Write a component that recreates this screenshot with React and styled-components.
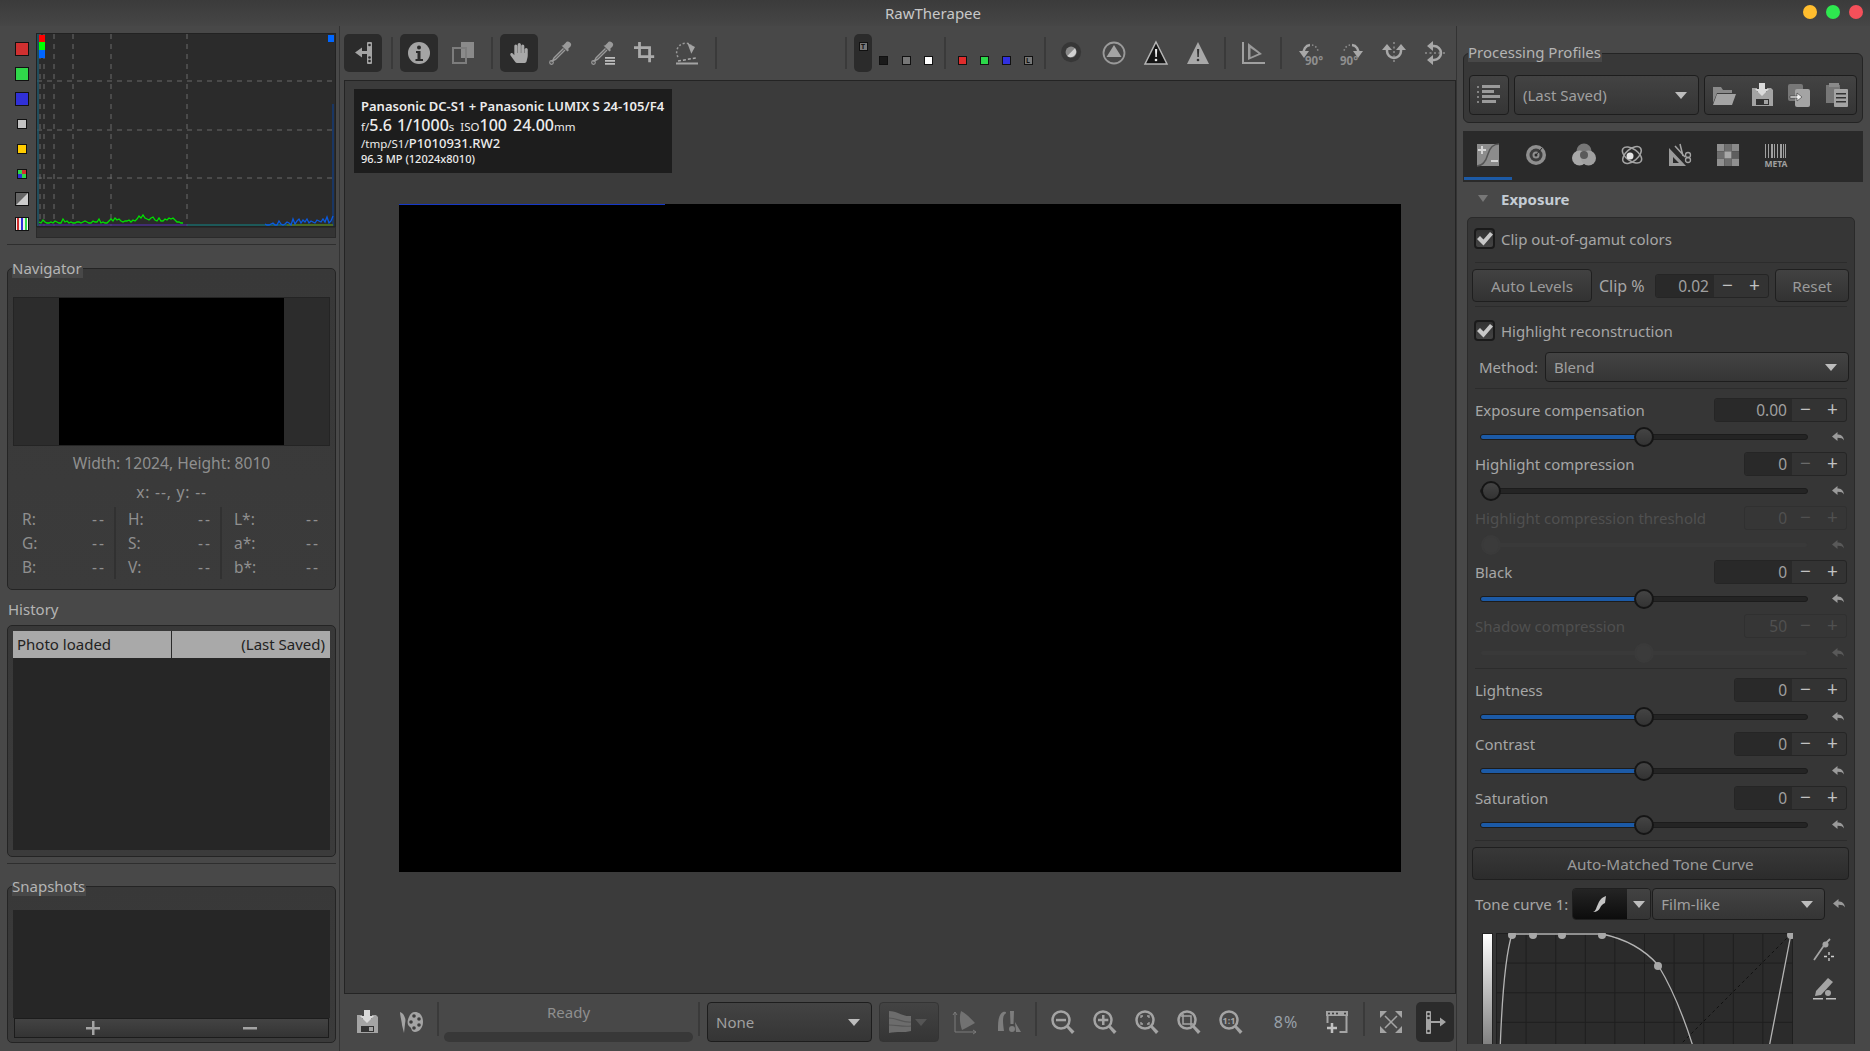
import React from 'react';
import styled, { createGlobalStyle } from 'styled-components';
import { FaHandPaper } from 'react-icons/fa';

const GlobalStyle = createGlobalStyle`
  html, body {
    margin: 0;
    padding: 0;
    background: #484848;
  }
  * {
    box-sizing: border-box;
  }
  body {
    font-family: 'Noto Sans', 'Open Sans', sans-serif;
    font-size: 15px;
    color: #a6a6a6;
  }
`;

const GREEN = [2,1,4,2,1,1,2,1,3,2,1,1,5,2,3,1,2,1,1,2,2,1,2,3,2,1,1,3,2,2,5,1,2,1,1,3,5,3,6,4,5,3,2,3,3,4,2,4,3,5,8,6,9,6,5,4,6,7,4,3,6,3,3,5,4,6,5,6,4,2,2,1,1];
const BLUE = [1,0,0,1,2,0,0,4,1,0,1,3,2,0,6,1,4,6,2,5,3,6,2,4,3,2,5,4,3,6,3,8,2,4,9];

const Win = styled.div`
  width: 1870px;
  height: 1051px;
  display: flex;
  flex-direction: column;
  overflow: hidden;
  background: #484848;
`;

const TitleBar = styled.div`
  height: 26px;
  flex: none;
  display: flex;
  align-items: center;
  justify-content: center;
  position: relative;
  padding-right: 4px;
  background: linear-gradient(#3b3b3b, #464646);
  color: #c8c8c8;
  font-size: 15px;
`;

const Dots = styled.div`
  position: absolute;
  right: 7px;
  top: 5px;
  display: flex;
  gap: 9px;
`;

const Dot = styled.span`
  width: 14px;
  height: 14px;
  border-radius: 50%;
  background: ${(p) => p.$c};
`;

const Body = styled.div`
  flex: 1;
  min-height: 0;
  display: flex;
`;

const LeftCol = styled.div`
  width: 340px;
  flex: none;
  padding: 7px 3px 0 7px;
  border-right: 1px solid #333;
`;

const HistRow = styled.div`
  display: flex;
`;

const HistButtons = styled.div`
  width: 30px;
  padding-top: 3px;
  display: flex;
  flex-direction: column;
`;

const HistSlot = styled.div`
  height: 25px;
  display: flex;
  align-items: center;
  justify-content: center;
`;

const HistBox = styled.span`
  display: block;
  width: ${(p) => p.$s}px;
  height: ${(p) => p.$s}px;
  border: 1px solid #111;
  background: ${(p) => p.$c};
`;

const HistColumn = styled.div`
  width: 300px;
`;

const HistPlot = styled.svg`
  display: block;
  width: 300px;
  height: 194px;
  background: #2b2b2b;
  border: 1px solid #222;
`;

const HistBar = styled.div`
  height: 11px;
  background: #343434;
  border: 1px solid #2a2a2a;
`;

const PaneSep = styled.div`
  height: 1px;
  margin-top: ${(p) => p.$mt}px;
  background: #2e2e2e;
`;

const Frame = styled.div`
  position: relative;
  border: 1px solid #242424;
  border-radius: 5px;
  background: linear-gradient(#383838, #3b3b3b);
  margin-top: ${(p) => p.$mt || 0}px;
  height: ${(p) => p.$h}px;
  padding: ${(p) => p.$pt}px 5px 0 5px;
`;

const Legend = styled.span`
  position: absolute;
  left: 4px;
  top: ${(p) => p.$top ?? -11}px;
  padding-right: 1px;
  background: #484848;
  line-height: 20px;
  height: 20px;
  color: #b4b4b4;
`;

const NavPreview = styled.div`
  height: 149px;
  background: #2c2c2c;
  border: 1px solid #242424;
  display: flex;
  justify-content: center;
`;

const NavImage = styled.div`
  width: 225px;
  background: #000;
`;

const NavLine = styled.div`
  margin-top: ${(p) => p.$mt}px;
  line-height: 20px;
  text-align: center;
  font-size: 15.6px;
  letter-spacing: ${(p) => p.$ls || 0}px;
  color: #8f8f8f;
`;

const ValueGrid = styled.div`
  display: flex;
  margin: 5px 0 0 9px;
  height: 72px;
`;

const ValueCol = styled.div`
  width: 94px;
  flex: none;
  padding-right: 10px;
  margin-right: 12px;
  border-right: ${(p) => (p.$last ? 'none' : '2px solid #313131')};
`;

const ValueRow = styled.div`
  height: 24px;
  display: flex;
  justify-content: space-between;
  align-items: center;
  color: #8f8f8f;
  font-size: 15.5px;
`;

const Dash = styled.span`
  letter-spacing: 2px;
  margin-right: -2px;
`;

const PlainLabel = styled.div`
  margin: 9px 0 0 1px;
  line-height: 20px;
  color: #b4b4b4;
`;

const HistoryList = styled.div`
  height: 219px;
  background: #262626;
`;

const HistoryRow = styled.div`
  height: 27px;
  display: grid;
  grid-template-columns: 159px 1fr;
  background: #a9a9a9;
  color: #222;
  line-height: 27px;
`;

const HistoryCell = styled.div`
  padding: 0 5px 0 4px;
  text-align: ${(p) => p.$align || 'left'};
  border-right: ${(p) => (p.$line ? '1px solid #2a2a2a' : 'none')};
`;

const SnapList = styled.div`
  height: 108px;
  background: #262626;
`;

const SnapButtons = styled.div`
  height: 20px;
  margin: 0 1px;
  display: grid;
  grid-template-columns: 1fr 1fr;
  border: 1px solid #1c1c1c;
  background: linear-gradient(#434343, #343434);
`;

const SnapButton = styled.div`
  display: flex;
  align-items: center;
  justify-content: center;
`;

const CenterCol = styled.div`
  width: 1112px;
  margin-left: 4px;
  flex: none;
  display: flex;
  flex-direction: column;
`;

const Toolbar = styled.div`
  height: ${(p) => p.$h}px;
  flex: none;
  display: flex;
  align-items: ${(p) => p.$align || 'center'};
  padding-top: ${(p) => p.$pt || 0}px;
`;

const Tool = styled.div`
  width: ${(p) => p.$w || 38}px;
  height: ${(p) => p.$hh || 38}px;
  margin-left: ${(p) => p.$ml || 0}px;
  flex: none;
  display: flex;
  align-items: center;
  justify-content: center;
  border-radius: 5px;
  background: ${(p) => (p.$active ? '#2b2b2b' : 'transparent')};
`;

const Sep = styled.span`
  width: 2px;
  height: ${(p) => p.$h || 32}px;
  flex: none;
  margin: 0 ${(p) => p.$r ?? 7}px 0 ${(p) => p.$l ?? 9}px;
  background: #3a3a3a;
`;

const Push = styled.div`
  margin-left: auto;
`;

const TinyBox = styled.span`
  width: 9px;
  height: 9px;
  margin-top: ${(p) => p.$mt ?? 14}px;
  display: block;
  border: 1px solid #111;
  background: ${(p) => p.$c};
  color: #111;
  font-size: 7px;
  font-weight: 700;
  line-height: 7px;
  text-align: center;
`;

const ToolStrip = styled(Tool)`
  background: #2b2b2b;
  align-items: flex-start;
  padding-top: 8px;
`;

const Preview = styled.div`
  flex: 1;
  min-height: 0;
  position: relative;
  display: flex;
  align-items: center;
  justify-content: center;
  padding-top: 2px;
  border: 1px solid #242424;
  background: #3b3b3b;
`;

const MetaBox = styled.div`
  position: absolute;
  left: 9px;
  top: 8px;
  width: 318px;
  height: 84px;
  padding: 7px 7px;
  background: #1d1d1d;
  color: #ececec;
`;

const MetaLine = styled.div`
  height: ${(p) => p.$lh}px;
  font-size: ${(p) => p.$fs}px;
  font-weight: ${(p) => p.$fw || 400};
  line-height: ${(p) => p.$lh}px;
  white-space: nowrap;
`;

const MetaBig = styled.span`
  font-size: ${(p) => p.$fs || 16}px;
  font-weight: 500;
  margin-right: ${(p) => p.$mr || 0}px;
`;

const PhotoArea = styled.div`
  position: relative;
  width: 1002px;
  height: 668px;
  background: #000;
`;

const BlueEdge = styled.div`
  position: absolute;
  left: 0;
  top: 0;
  width: 266px;
  height: 1px;
  background: #1638c8;
`;

const ReadyBlock = styled.div`
  width: 249px;
  height: 40px;
  flex: none;
  display: flex;
  flex-direction: column;
  justify-content: space-between;
`;

const ReadyText = styled.div`
  line-height: 20px;
  font-size: 15px;
  text-align: center;
  color: #8f8f8f;
`;

const ProgressTrack = styled.div`
  height: 10px;
  border-radius: 5px;
  background: #383838;
`;

const Combo = styled.div`
  width: ${(p) => p.$w}px;
  height: ${(p) => p.$h}px;
  margin-left: ${(p) => p.$ml || 0}px;
  flex: none;
  display: flex;
  align-items: center;
  justify-content: space-between;
  padding: 0 11px 0 8px;
  border: 1px solid ${(p) => (p.$off ? '#343434' : '#1d1d1d')};
  border-radius: 4px;
  background: linear-gradient(#434343, #353535);
  color: ${(p) => (p.$off ? '#666' : '#a0a0a0')};
`;

const Caret = styled.span`
  width: 0;
  height: 0;
  flex: none;
  border-left: 6px solid transparent;
  border-right: 6px solid transparent;
  border-top: 7px solid ${(p) => p.$c || '#bdbdbd'};
`;

const Zoom = styled.div`
  width: 68px;
  height: 40px;
  flex: none;
  display: flex;
  align-items: center;
  justify-content: center;
  font-size: 16px;
  letter-spacing: 1px;
  color: #98a0a8;
`;

const RightCol = styled.div`
  width: 414px;
  flex: none;
  padding: 27px 0 7px 6px;
  border-left: 1px solid #333;
  display: flex;
  flex-direction: column;
`;

const ProfileFrame = styled.div`
  position: relative;
  width: 400px;
  height: 70px;
  flex: none;
  padding: 21px 5px 0 5px;
  display: flex;
  border: 1px solid #242424;
  border-radius: 6px;
  background: #383838;
`;

const ProfileButton = styled.div`
  width: 40px;
  height: 40px;
  flex: none;
  display: flex;
  align-items: center;
  justify-content: center;
  border: 1px solid #1d1d1d;
  border-radius: 4px;
  background: linear-gradient(#434343, #353535);
`;

const ProfileGroup = styled(ProfileButton)`
  width: 153px;
  margin-left: 5px;
  justify-content: space-between;
  padding: 0 7px 0 7px;
`;

const TabBar = styled.div`
  width: 400px;
  height: 51px;
  flex: none;
  margin-top: 8px;
  padding-left: 1px;
  display: flex;
  background: #2a2a2a;
`;

const Tab = styled.div`
  width: 48px;
  height: 49px;
  padding-top: 2px;
  display: flex;
  align-items: center;
  justify-content: center;
  border-bottom: 3px solid ${(p) => (p.$active ? '#1c5aa6' : 'transparent')};
`;

const SectionHead = styled.div`
  height: 35px;
  flex: none;
  display: flex;
  align-items: center;
  gap: 13px;
  padding: 0 0 2px 15px;
  color: #c4ccd4;
  font-weight: 700;
  font-size: 15px;
`;

const HeadCaret = styled.span`
  width: 0;
  height: 0;
  border-left: 5px solid transparent;
  border-right: 5px solid transparent;
  border-top: 7px solid #777;
`;

const Scroller = styled.div`
  flex: 1;
  min-height: 0;
  overflow: hidden;
  margin-left: 4px;
  width: 388px;
`;

const ToolFrame = styled.div`
  height: 900px;
  padding: 0 5px 0 4px;
  border: 1px solid #2a2a2a;
  border-radius: 5px;
  background: #363636;
`;

const CheckRow = styled.div`
  height: 21px;
  margin-top: ${(p) => p.$mt}px;
  padding-left: 2px;
  display: flex;
  align-items: center;
  gap: 6px;
`;

const CheckBox = styled.span`
  width: 21px;
  height: 21px;
  flex: none;
  display: flex;
  align-items: center;
  justify-content: center;
  border: 2px solid #1a1a1a;
  border-radius: 4px;
  background: linear-gradient(#333, #444);
`;

const ToolSep = styled.div`
  height: 1px;
  margin: ${(p) => p.$mt}px 2px ${(p) => p.$mb || 0}px 3px;
  background: #2c2c2c;
`;

const ButtonRow = styled.div`
  height: 33px;
  margin-top: 6px;
  display: flex;
  align-items: center;
`;

const PushButton = styled.div`
  width: ${(p) => p.$w}px;
  height: 33px;
  flex: none;
  display: flex;
  align-items: center;
  justify-content: center;
  border: 1px solid #1f1f1f;
  border-radius: 4px;
  background: linear-gradient(#424242, #323232);
  color: #9a9a9a;
  font-size: 15.3px;
`;

const ClipLabel = styled.span`
  width: 63px;
  flex: none;
  padding-left: 7px;
  white-space: nowrap;
  font-size: 16px;
`;

const ClipGap = styled.span`
  width: 6px;
  flex: none;
`;

const Spin = styled.div`
  width: ${(p) => p.$w}px;
  height: 24px;
  flex: none;
  display: flex;
  border: 1px solid ${(p) => (p.$off ? '#303030' : '#252525')};
  border-radius: 3px;
  background: ${(p) => (p.$off ? '#363636' : '#333')};
  color: ${(p) => (p.$off ? '#505050' : '#a0a0a0')};
`;

const SpinValue = styled.div`
  flex: 1;
  min-width: 0;
  line-height: 22px;
  padding-right: 5px;
  text-align: right;
  background: ${(p) => (p.$off ? '#363636' : '#292929')};
  border-radius: 3px 0 0 3px;
  font-size: 15.5px;
`;

const SpinBtn = styled.div`
  width: 27px;
  line-height: 21px;
  text-align: center;
  font-size: 19px;
  color: ${(p) => (p.$off ? '#505050' : p.$dim ? '#6a6a6a' : '#c2c2c2')};
`;

const MethodRow = styled.div`
  height: 30px;
  margin-top: 11px;
  padding-left: 7px;
  display: flex;
  align-items: center;
  justify-content: space-between;
`;

const Adjuster = styled.div`
  height: 54px;
`;

const AdjTop = styled.div`
  height: 27px;
  padding: 0 2px 0 3px;
  display: flex;
  align-items: center;
  justify-content: space-between;
  color: ${(p) => (p.$off ? '#505050' : '#a6a6a6')};
`;

const AdjBottom = styled.div`
  height: 27px;
  padding-left: 8px;
  display: flex;
  align-items: center;
`;

const Track = styled.div`
  position: relative;
  width: 328px;
  height: 6px;
  border-radius: 3px;
  background: ${(p) => (p.$off ? '#393939' : '#242424')};
  border: 1px solid ${(p) => (p.$off ? '#363636' : '#1c1c1c')};
`;

const TrackFill = styled.div`
  height: 100%;
  width: ${(p) => p.$v}%;
  border-radius: 3px 0 0 3px;
  background: #1c5aa6;
`;

const Knob = styled.span`
  position: absolute;
  top: -8px;
  left: ${(p) => p.$v}%;
  width: 20px;
  height: 20px;
  margin-left: -10px;
  border-radius: 50%;
  border: 2px solid ${(p) => (p.$off ? '#3a3a3a' : '#151515')};
  background: ${(p) => (p.$off ? '#3b3b3b' : 'linear-gradient(#444, #333)')};
`;

const ResetSlot = styled.span`
  margin-left: ${(p) => p.$ml ?? 24}px;
  display: block;
  opacity: ${(p) => (p.$off ? 0.35 : 1)};
`;

const WideButton = styled(PushButton)`
  width: 377px;
  margin-top: 6px;
  background: linear-gradient(#383838, #2c2c2c);
`;

const ToneRow = styled.div`
  height: 32px;
  margin-top: 8px;
  padding-left: 3px;
  display: flex;
  align-items: center;
  white-space: nowrap;
`;

const ToneButton = styled.div`
  width: 79px;
  height: 32px;
  margin-left: 4px;
  flex: none;
  display: flex;
  border: 1px solid #1f1f1f;
  border-radius: 4px;
  overflow: hidden;
`;

const ToneIcon = styled.div`
  flex: 1;
  display: flex;
  align-items: center;
  justify-content: center;
  background: linear-gradient(#242424, #0c0c0c);
`;

const ToneArrow = styled.div`
  width: 23px;
  display: flex;
  align-items: center;
  justify-content: center;
  background: linear-gradient(#424242, #343434);
`;

const GraphRow = styled.div`
  height: 120px;
  margin-top: 13px;
  padding-left: 10px;
  display: flex;
`;

const GradientBar = styled.div`
  width: 11px;
  height: 120px;
  border: 1px solid #222;
  background: linear-gradient(#fff, #777);
`;

const CurvePlot = styled.svg`
  display: block;
  width: 297px;
  height: 120px;
  margin-left: 3px;
  flex: none;
`;

const CurveTools = styled.div`
  margin-left: 20px;
  display: flex;
  flex-direction: column;
  gap: 13px;
  padding-top: 5px;
`;

const Svg = styled.svg.attrs((p) => ({ viewBox: p.$vb || '0 0 24 24' }))`
  display: block;
  flex: none;
  width: ${(p) => p.$s || 24}px;
  height: ${(p) => p.$s || 24}px;
  fill: ${(p) => p.$c || '#a4a4a4'};
  font-family: 'Noto Sans', sans-serif;
  overflow: visible;
`;

const DIM = '#7d7d7d';
const DARK = '#2b2b2b';

const Line = ({ d, w = 2, c = 'currentColor', dash, cap }) => (
  <path d={d} fill="none" stroke={c} strokeWidth={w} strokeDasharray={dash} strokeLinecap={cap} />
);

const HideLeft = () => (
  <Svg>
    <path d="M4 11.5l7-5v3.5h5v3h-5v3.500z" />
    <rect x="16" y="1" width="5" height="22" rx="1" />
    <circle cx="18.5" cy="4" r="1.3" fill={DARK} />
    <circle cx="18.5" cy="16.5" r="1.3" fill={DARK} />
    <circle cx="18.5" cy="20" r="1.3" fill={DARK} />
  </Svg>
);

const ShowRight = () => (
  <Svg>
    <rect x="3" y="1" width="5" height="23" rx="1" />
    <circle cx="5.5" cy="4" r="1.3" fill={DARK} />
    <circle cx="5.5" cy="8" r="1.3" fill={DARK} />
    <circle cx="5.5" cy="21" r="1.3" fill={DARK} />
    <path d="M8 11h9V7.5l6 4.500-6 4.500V13H8z" />
  </Svg>
);

const Info = () => (
  <Svg>
    <circle cx="12" cy="12" r="11" />
    <circle cx="12" cy="6.5" r="2" fill={DARK} />
    <path d="M9 10h4.500v8H16v2H8.500v-2h2v-6H9z" fill={DARK} />
  </Svg>
);

const BeforeAfter = () => (
  <Svg $c={DIM}>
    <rect x="10" y="1" width="13" height="16" fill="#8a8a8a" />
    <Line d="M2 7h13v15H2z" c={DIM} />
  </Svg>
);

const Dropper = ({ lines }) => (
  <Svg>
    <path d="M14 4.500l2.500-2.500a3 3 0 0 1 5 3.400l-2.500 2.600 1 1-1.500 1.500-6-6z" fill="#9a9a9a" />
    <Line d="M14.500 7.500L5 17l-1.500 3 3-1.500L16 9" w={1.400} c="#9a9a9a" />
    <circle cx="2.500" cy="21.500" r="1.800" fill="none" stroke="#9a9a9a" strokeWidth="1.200" />
    {lines && <path d="M14 16h10v1.800H14zM14 19h10v1.800H14zM14 22h10v1.800H14z" fill="#bdbdbd" />}
  </Svg>
);

const Crop = () => (
  <Svg $s={22}>
    <Line d="M0 6h17v16M6 0v16h16" w={3} c="#ababab" />
  </Svg>
);

const Straighten = () => (
  <Svg>
    <Line d="M3 16A9 9 0 0 1 16 4" w={1.500} dash="2 2" c="#9a9a9a" />
    <path d="M13 2l9 3-3 8z" transform="rotate(8 17 7) translate(0 1) scale(0.900)" />
    <Line d="M3 20l18-3" w={1.500} dash="3 2" c="#ababab" />
    <rect x="1" y="21.500" width="22" height="2" />
  </Svg>
);

const HalfCircle = () => (
  <Svg $s={22}>
    <circle cx="11" cy="11" r="11" fill="#373737" />
    <circle cx="11" cy="11" r="6" fill="#888" />
    <path d="M6.800 15.200a6 6 0 0 0 8.400-8.400z" fill="#d2d2d2" />
  </Svg>
);

const CircleTri = () => (
  <Svg>
    <circle cx="12" cy="12" r="10.500" fill="none" stroke="#9a9a9a" strokeWidth="1.800" />
    <path d="M12 4l7.500 12h-15z" fill="#a4a4a4" />
  </Svg>
);

const Warn = ({ dark }) => (
  <Svg>
    <path d="M12 1l11 22H1z" fill={dark ? '#151515' : '#a8a8a8'} stroke={dark ? '#b5b5b5' : 'none'} strokeWidth="1.500" />
    <path d="M11 8h2.200l-.4 8h-1.400z" fill={dark ? '#eee' : '#333'} />
    <circle cx="12" cy="19" r="1.300" fill={dark ? '#eee' : '#333'} />
  </Svg>
);

const Angle = () => (
  <Svg>
    <Line d="M2 1v21h22" c="#a0a0a0" />
    <path d="M7 2l14 11-14 6z" fill="#9a9a9a" />
    <path d="M9.500 7v9l8-3.400z" fill="#484848" />
  </Svg>
);

const Rotate = ({ flip }) => (
  <Svg>
    <g transform={flip ? 'translate(24 0) scale(-1 1)' : undefined}>
      <Line d="M6 13A7 7 0 0 1 12 4" w={2.500} c="#a8a8a8" />
      <path d="M1 10h10l-5 7z" fill="#a8a8a8" />
      <Line d="M14 4A7 7 0 0 1 20 11" w={1.500} dash="1.500 2" c="#8f8f8f" />
    </g>
    <text x={flip ? 0 : 7} y="24" fontSize="11.500" fontWeight="700" fill="#8f8f8f">90°</text>
  </Svg>
);

const FlipH = () => (
  <Svg>
    <Line d="M5 7v3a7 7 0 0 0 14 0V7" w={2.500} c="#a8a8a8" />
    <path d="M0 9l5-6 5 6zM14 9l5-6 5 6z" fill="#a8a8a8" />
    <Line d="M12 1v22" w={1.500} dash="2 2.500" c="#8f8f8f" />
  </Svg>
);

const FlipV = () => (
  <Svg>
    <Line d="M7 5h3a7 7 0 0 1 0 14H7" w={2.500} c="#a8a8a8" />
    <path d="M9 0l-6 5 6 5zM9 14l-6 5 6 5z" fill="#a8a8a8" />
    <Line d="M1 12h22" w={1.500} dash="2 2.500" c="#8f8f8f" />
  </Svg>
);

const Floppy = () => (
  <Svg>
    <path d="M2 5h5v4h10V5h4l2 2v16H2z" />
    <rect x="6" y="16" width="13" height="6" fill="#333" />
    <rect x="14" y="17" width="4" height="4" />
    <path d="M9 0h6v6h4l-7 7-7-7h4z" fill="#dadada" />
  </Svg>
);

const Palette = () => (
  <Svg>
    <path d="M1 2c3 1 4 3 5 6 1 2 0 5 0 6l-1 9-2-8c0-3-2-9-2-13z" />
    <path d="M16 2c5 0 8 4 8 10s-4 10-8 10c-4 0-3-4-5-5-3-2-3-6-1-10 1-3 3-5 6-5z" />
    <circle cx="15" cy="6" r="1.800" fill="#3d3d3d" />
    <circle cx="20" cy="9" r="1.800" fill="#3d3d3d" />
    <circle cx="20" cy="15" r="1.800" fill="#3d3d3d" />
    <circle cx="15" cy="18" r="1.800" fill="#3d3d3d" />
    <circle cx="12" cy="12" r="1.800" fill="#3d3d3d" />
  </Svg>
);

const Wave = () => (
  <Svg>
    <path d="M1 1c8 0 14 6 22 5v15c-7 2-14 0-22 2z" fill="#6c6c6c" />
    <Line d="M1 8c8 0 14 5 22 4M1 15c8 0 14 2 22 1" w={1.200} c="#565656" />
  </Svg>
);

const Gamut = () => (
  <Svg>
    <Line d="M2 2v20h21M2 2L0 5M2 2l2 3M23 22l-3-2M23 22l-3 2" w={1} c="#7a7a7a" />
    <path d="M8 1c6 3 10 8 14 12l-9 5-4 2c-2-6-3-13-1-19z" fill="#727272" />
  </Svg>
);

const Falsecolor = () => (
  <Svg>
    <path d="M1 21c0-9 0-16 5-19 3-1 4 1 2 2-3 3-2 9-1 17z" fill={DIM} />
    <path d="M13 1h4l-.5 13h-3zM15 16a3 3 0 1 1 0 6 3 3 0 0 1 0-6zM18 12l6 10h-5z" fill={DIM} />
  </Svg>
);

const Magnifier = ({ children }) => (
  <Svg>
    <circle cx="10" cy="10" r="8.500" fill="none" stroke="#a4a4a4" strokeWidth="2.500" />
    <path d="M15.500 17.500l2-2 6 6-2.500 2.500z" fill="#a4a4a4" />
    {children}
  </Svg>
);

const NewWindow = () => (
  <Svg>
    <rect x="1" y="1" width="22" height="5" />
    <circle cx="4" cy="3.500" r="1" fill="#333" />
    <circle cx="8" cy="3.500" r="1" fill="#333" />
    <circle cx="12" cy="3.500" r="1" fill="#333" />
    <circle cx="20" cy="3.500" r="1" fill="#333" />
    <Line d="M21.500 6v16h-7M2.500 6v7" w={2} c="#a4a4a4" />
    <Line d="M7 13v10M2 18h10" w={2.500} c="#c0c0c0" />
  </Svg>
);

const Fullscreen = () => (
  <Svg>
    <Line d="M6 6l12 12M18 6L6 18" w={1.500} c="#a4a4a4" />
    <path d="M1 1h7L1 8zM23 1h-7l7 7zM1 23h7l-7-7zM23 23h-7l7-7z" />
  </Svg>
);

const ProfileList = () => (
  <Svg>
    <Line d="M1 3v20" w={1.500} dash="2 3" c="#9a9a9a" />
    <path d="M5 2h18v3H5zM5 7h12v3H5zM5 12h18v3H5zM5 17h14v3H5z" fill="#9a9a9a" />
  </Svg>
);

const Folder = () => (
  <Svg>
    <path d="M1 4h8l2 3h9v3H5l-4 10z" fill="#8a8a8a" />
    <path d="M5 11h19l-4 11H1z" />
  </Svg>
);

const CopyDoc = () => (
  <Svg>
    <rect x="1" y="1" width="15" height="17" rx="2" fill="#777" />
    <rect x="8" y="6" width="15" height="18" rx="2" fill="#a4a4a4" />
    <path d="M3 13h7v-3l5 4-5 4v-3H3z" fill="#eee" stroke="#333" strokeWidth=".6" />
  </Svg>
);

const PasteDoc = () => (
  <Svg>
    <rect x="1" y="2" width="14" height="18" fill="#777" />
    <rect x="4" y="0" width="10" height="4" fill="#8a8a8a" />
    <rect x="9" y="6" width="14" height="18" rx="1" fill="#a4a4a4" />
    <path d="M11 10h10v1.500H11zM11 14h10v1.500H11zM11 18h10v1.500H11z" fill="#333" />
  </Svg>
);

const TabTone = () => (
  <Svg>
    <rect x="1" y="1" width="22" height="22" fill="#8c8c8c" />
    <Line d="M23 1c-6 0-9 3-11 10s-5 12-11 12" w={1.500} c="#555" />
    <path d="M5 3h2v3h3v2H7v3H5V8H2V6h3zM15 17h7v2h-7z" fill="#d4d4d4" />
  </Svg>
);

const TabLens = () => (
  <Svg>
    <circle cx="12" cy="12" r="10" fill="#8f8f8f" />
    <circle cx="12" cy="12" r="6.500" fill="#3d3d3d" />
    <circle cx="12" cy="12" r="3.500" fill="#8f8f8f" />
    <circle cx="12" cy="12" r="1.500" fill="#2a2a2a" />
    <Line d="M18 5l-6 7" w={1} c="#2a2a2a" />
  </Svg>
);

const TabColor = () => (
  <Svg>
    <circle cx="12" cy="8" r="7.500" fill="#777" />
    <circle cx="7.500" cy="15" r="7.500" fill="#a8a8a8" />
    <circle cx="16.500" cy="15" r="7.500" fill="#a0a0a0" />
    <circle cx="12" cy="12" r="4" fill="#5a5a5a" />
  </Svg>
);

const TabAtom = () => (
  <Svg>
    <ellipse cx="12" cy="12" rx="11" ry="6" fill="none" stroke="#a4a4a4" strokeWidth="1.500" transform="rotate(35 12 12)" />
    <ellipse cx="12" cy="12" rx="11" ry="6" fill="none" stroke="#a4a4a4" strokeWidth="1.500" transform="rotate(-40 12 12)" />
    <circle cx="10" cy="13" r="3.500" fill="#e4e4e4" />
  </Svg>
);

const TabTransform = () => (
  <Svg>
    <path d="M1 5l17 18H1zM5 14v6h6z" fillRule="evenodd" fill="#9a9a9a" />
    <Line d="M7 3l10 11M12 1l3 12" w={1.500} c="#a4a4a4" />
    <circle cx="20" cy="12" r="2.500" fill="none" stroke="#a4a4a4" strokeWidth="1.300" />
    <circle cx="20" cy="17" r="2.500" fill="none" stroke="#a4a4a4" strokeWidth="1.300" />
  </Svg>
);

const CHECKER = ['#909090', '#6e6e6e', '#8a8a8a', '#6e6e6e', '#a8a8a8', '#5e5e5e', '#909090', '#6e6e6e', '#909090'];

const TabRaw = () => (
  <Svg>
    {CHECKER.map((c, i) => (
      <rect key={i} x={1 + (i % 3) * 7.340} y={1 + Math.floor(i / 3) * 7.340} width="7.340" height="7.340" fill={c} />
    ))}
  </Svg>
);

const BARS = [0, 3, 6, 9, 12, 15, 18, 20];

const TabMeta = () => (
  <Svg>
    {BARS.map((x) => (
      <rect key={x} x={x + 1} y="1" width={x === 6 || x === 15 ? 2 : 1} height="14" fill="#a0a0a0" />
    ))}
    <text x="12" y="23.500" fontSize="8.500" fontWeight="700" textAnchor="middle" fill="#a0a0a0">META</text>
  </Svg>
);

const Undo = () => (
  <Svg $s={12} $c="#9a9a9a" $vb="0 0 12 12">
    <path d="M0 5.500L5.500 1v2.500c3 0 6 1 6.500 6C11 7.500 9 6.800 5.500 6.800V10z" />
  </Svg>
);

const CheckMark = () => (
  <Svg $s={17} $c="#c8c8c8" $vb="0 0 17 17">
    <path d="M1 9l3-3 3.500 3.500L14 2l3 2.500-9.500 11z" />
  </Svg>
);

const ToneGlyph = () => (
  <Svg $s={18} $c="#c4c4c4" $vb="0 0 18 18">
    <path d="M2 17c3-1 3-4 5-8s3-6 8-8l-1 7c-3 1-4 3-5 5s-3 4-7 4z" />
  </Svg>
);

const PickPoint = () => (
  <Svg>
    <Line d="M1 22L12 6l5-5" w={1.800} c="#a4a4a4" />
    <circle cx="12.500" cy="6.500" r="3" />
    <Line d="M16 14v3M16 20v3M11 18.500h3M18 18.500h3" w={1.300} c="#d0d0d0" />
  </Svg>
);

const PencilCurve = () => (
  <Svg>
    <path d="M3 16L15 3l5 4-12 13-6 1z" />
    <circle cx="15" cy="18" r="3" />
    <path d="M0 23h10v1.500H0zM13 23h10v1.500H13z" fill="#c0c0c0" />
  </Svg>
);

const GRID_X = [0, 29.600, 59.200, 88.800, 118.400, 148, 177.600, 207.200, 236.800, 266.400, 296];
const GRID_Y = [0, 29.600, 59.200, 88.800, 118.400];
const POINTS = [[16, 1], [37, 1], [66, 1], [106, 1], [162, 32], [295, 1]];

const Adj = ({ label, value, spin, pos, off, noFill, dimMinus }) => (
  <Adjuster>
    <AdjTop $off={off}>
      <span>{label}</span>
      <Spin $w={spin} $off={off}>
        <SpinValue $off={off}>{value}</SpinValue>
        <SpinBtn $off={off} $dim={dimMinus}>−</SpinBtn>
        <SpinBtn $off={off}>+</SpinBtn>
      </Spin>
    </AdjTop>
    <AdjBottom>
      <Track $off={off}>
        {!noFill && !off && <TrackFill $v={pos} />}
        <Knob $v={pos} $off={off} />
      </Track>
      <ResetSlot $off={off}><Undo /></ResetSlot>
    </AdjBottom>
  </Adjuster>
);

const App = () => {
  const greenPts = GREEN.map((h, i) => `${2 + i * 2},${190 - h}`).join(' ');
  const bluePts = BLUE.map((h, i) => `${228 + i * 2},${191 - h}`).join(' ');

  return (
    <Win>
      <GlobalStyle />
      <TitleBar>
        RawTherapee
        <Dots>
          <Dot $c="#ffbd2e" />
          <Dot $c="#2ee84f" />
          <Dot $c="#f5505a" />
        </Dots>
      </TitleBar>
      <Body>
        <LeftCol>
          <HistRow>
            <HistButtons>
              <HistSlot><HistBox $s={14} $c="#d03030" /></HistSlot>
              <HistSlot><HistBox $s={14} $c="#30d84a" /></HistSlot>
              <HistSlot><HistBox $s={14} $c="#3030d8" /></HistSlot>
              <HistSlot><HistBox $s={10} $c="#c4c4c4" /></HistSlot>
              <HistSlot><HistBox $s={10} $c="#ffcc00" /></HistSlot>
              <HistSlot>
                <Svg $s={10} $vb="0 0 10 10">
                  <rect width="10" height="10" fill="#111" />
                  <rect x="1" y="1" width="4" height="4" fill="#30d84a" />
                  <rect x="5" y="1" width="4" height="4" fill="#d03030" />
                  <rect x="1" y="5" width="4" height="4" fill="#3030d8" />
                  <rect x="5" y="5" width="4" height="4" fill="#30d84a" />
                </Svg>
              </HistSlot>
              <HistSlot>
                <Svg $s={14} $vb="0 0 14 14">
                  <rect width="14" height="14" fill="#111" />
                  <rect x="1" y="1" width="12" height="12" fill="#666" />
                  <path d="M13 1v12H1z" fill="#ccc" />
                </Svg>
              </HistSlot>
              <HistSlot>
                <Svg $s={14} $vb="0 0 14 14">
                  <rect width="14" height="14" fill="#111" />
                  <rect x="1" y="1" width="12" height="12" fill="#eee" />
                  <rect x="2" y="1" width="2" height="12" fill="#d03030" />
                  <rect x="6" y="1" width="2" height="12" fill="#3030d8" />
                  <rect x="10" y="1" width="2" height="12" fill="#30d84a" />
                </Svg>
              </HistSlot>
            </HistButtons>
            <HistColumn>
              <HistPlot viewBox="0 0 298 192">
                {[3, 7, 17, 36, 74, 150].map((x) => (
                  <line key={x} x1={x} x2={x} y1="0" y2="192" stroke="#6a6a6a" strokeDasharray="5 5" />
                ))}
                {[47, 96, 144].map((y) => (
                  <line key={y} x1="0" x2="298" y1={y} y2={y} stroke="#6a6a6a" strokeDasharray="5 5" />
                ))}
                <line x1="1" x2="1" y1="0" y2="192" stroke="#1f5a6e" strokeWidth="1.500" />
                <line x1="296" x2="296" y1="70" y2="192" stroke="#0f3f8a" strokeWidth="1.200" />
                <rect x="2" y="1" width="6" height="7" fill="#ff0000" />
                <rect x="2" y="8" width="6" height="8" fill="#00ff00" />
                <rect x="2" y="16" width="6" height="8" fill="#0066ff" />
                <rect x="291" y="1" width="6" height="7" fill="#0066ff" />
                <line x1="2" x2="150" y1="191" y2="191" stroke="#4a2f8a" strokeWidth="1.500" />
                <line x1="150" x2="296" y1="191" y2="191" stroke="#1a6a6a" strokeWidth="1.500" />
                <line x1="250" x2="296" y1="191" y2="191" stroke="#5a7010" strokeWidth="1.500" />
                <polyline points={bluePts} fill="none" stroke="#0a5ae0" strokeWidth="1.300" />
                <polyline points={greenPts} fill="none" stroke="#00e000" strokeWidth="1.300" />
              </HistPlot>
              <HistBar />
            </HistColumn>
          </HistRow>
          <PaneSep $mt={6} />
          <Frame $mt={23} $h={322} $pt={28}>
            <Legend>Navigator</Legend>
            <NavPreview><NavImage /></NavPreview>
            <NavLine $mt={7}>Width: 12024, Height: 8010</NavLine>
            <NavLine $mt={9} $ls={0.8}>x: --, y: --</NavLine>
            <ValueGrid>
              <ValueCol>
                <ValueRow><span>R:</span><Dash>--</Dash></ValueRow>
                <ValueRow><span>G:</span><Dash>--</Dash></ValueRow>
                <ValueRow><span>B:</span><Dash>--</Dash></ValueRow>
              </ValueCol>
              <ValueCol>
                <ValueRow><span>H:</span><Dash>--</Dash></ValueRow>
                <ValueRow><span>S:</span><Dash>--</Dash></ValueRow>
                <ValueRow><span>V:</span><Dash>--</Dash></ValueRow>
              </ValueCol>
              <ValueCol $last>
                <ValueRow><span>L*:</span><Dash>--</Dash></ValueRow>
                <ValueRow><span>a*:</span><Dash>--</Dash></ValueRow>
                <ValueRow><span>b*:</span><Dash>--</Dash></ValueRow>
              </ValueCol>
            </ValueGrid>
          </Frame>
          <PlainLabel>History</PlainLabel>
          <Frame $mt={6} $h={232} $pt={5}>
            <HistoryList>
              <HistoryRow>
                <HistoryCell $line>Photo loaded</HistoryCell>
                <HistoryCell $align="right">(Last Saved)</HistoryCell>
              </HistoryRow>
            </HistoryList>
          </Frame>
          <PaneSep $mt={6} />
          <Frame $mt={22} $h={157} $pt={23}>
            <Legend>Snapshots</Legend>
            <SnapList />
            <SnapButtons>
              <SnapButton>
                <Svg $s={14} $vb="0 0 14 14"><path d="M6 0h2.500v6H14v2.500H8.500V14H6V8.500H0V6h6z" /></Svg>
              </SnapButton>
              <SnapButton>
                <Svg $s={14} $vb="0 0 14 14"><rect y="6" width="14" height="2.500" /></Svg>
              </SnapButton>
            </SnapButtons>
          </Frame>
        </LeftCol>

        <CenterCol>
          <Toolbar $h={54}>
            <Tool $active><HideLeft /></Tool>
            <Sep />
            <Tool $active><Info /></Tool>
            <Tool $ml={6}><BeforeAfter /></Tool>
            <Sep />
            <Tool $active><FaHandPaper size={20} color="#a8a8a8" /></Tool>
            <Tool $ml={4}><Dropper /></Tool>
            <Tool $ml={4}><Dropper lines /></Tool>
            <Tool $ml={4}><Crop /></Tool>
            <Tool $ml={4}><Straighten /></Tool>
            <Sep />
            <Push />
            <Sep $l={0} $r={7} />
            <ToolStrip $w={18}><TinyBox $mt={0} $c="#777">T</TinyBox></ToolStrip>
            <Tool $w={23}><TinyBox $c="#1a1a1a" /></Tool>
            <Tool $w={22}><TinyBox $c="#777" /></Tool>
            <Tool $w={22}><TinyBox $c="#fff" /></Tool>
            <Sep $l={5} $r={5} />
            <Tool $w={22}><TinyBox $c="#e02c2c" /></Tool>
            <Tool $w={22}><TinyBox $c="#2cd84a" /></Tool>
            <Tool $w={22}><TinyBox $c="#3030e0" /></Tool>
            <Tool $w={22}><TinyBox $c="#777">L</TinyBox></Tool>
            <Sep $l={5} $r={5} />
            <Tool $w={42}><HalfCircle /></Tool>
            <Tool $w={42}><CircleTri /></Tool>
            <Tool $w={42}><Warn dark /></Tool>
            <Tool $w={42}><Warn /></Tool>
            <Sep $l={5} $r={5} />
            <Tool $w={44}><Angle /></Tool>
            <Sep $l={5} $r={7} />
            <Tool $w={42}><Rotate /></Tool>
            <Tool $w={42}><Rotate flip /></Tool>
            <Tool $w={42}><FlipH /></Tool>
            <Tool $w={41}><FlipV /></Tool>
          </Toolbar>
          <Preview>
            <MetaBox>
              <MetaLine $fs={13} $fw={600} $lh={20}>Panasonic DC-S1 + Panasonic LUMIX S 24-105/F4</MetaLine>
              <MetaLine $fs={11.500} $lh={18}>
                f/<MetaBig $mr={5}>5.6</MetaBig><MetaBig>1/1000</MetaBig>s
                <span>&nbsp;&nbsp;ISO</span><MetaBig $mr={6}>100</MetaBig><MetaBig>24.00</MetaBig>mm
              </MetaLine>
              <MetaLine $fs={11.500} $lh={19}>/tmp/S1/<MetaBig $fs={13}>P1010931.RW2</MetaBig></MetaLine>
              <MetaLine $fs={11} $fw={500} $lh={11}>96.3 MP (12024x8010)</MetaLine>
            </MetaBox>
            <PhotoArea><BlueEdge /></PhotoArea>
          </Preview>
          <Toolbar $h={57} $align="flex-start" $pt={8}>
            <Tool $ml={4} $hh={40}><Floppy /></Tool>
            <Tool $ml={6} $hh={40}><Palette /></Tool>
            <Sep $h={34} $l={7} $r={5} />
            <ReadyBlock>
              <ReadyText>Ready</ReadyText>
              <ProgressTrack />
            </ReadyBlock>
            <Sep $h={34} $l={5} $r={7} />
            <Combo $w={165} $h={40}>None<Caret /></Combo>
            <Combo $w={60} $h={40} $ml={7} $off>
              <Wave />
              <Caret $c="#555" />
            </Combo>
            <Tool $w={44} $ml={4} $hh={40}><Gamut /></Tool>
            <Tool $w={44} $hh={40}><Falsecolor /></Tool>
            <Sep $h={34} $l={4} $r={5} />
            <Tool $w={42} $hh={40}>
              <Magnifier><rect x="5" y="8.800" width="10" height="2.500" /></Magnifier>
            </Tool>
            <Tool $w={42} $hh={40}>
              <Magnifier><path d="M9 5h2.500v3.800h3.800v2.500h-3.800V15H9v-3.700H5V8.800h4z" /></Magnifier>
            </Tool>
            <Tool $w={42} $hh={40}>
              <Magnifier><Line d="M6 8V6h2M12 6h2v2M14 12v2h-2M8 14H6v-2" w={1.300} c="#a4a4a4" /></Magnifier>
            </Tool>
            <Tool $w={42} $hh={40}>
              <Magnifier><Line d="M6 4v10h10M4 6h10v10" w={1.500} c="#a4a4a4" /></Magnifier>
            </Tool>
            <Tool $w={42} $hh={40}>
              <Magnifier>
                <text x="10" y="13.500" fontSize="9" fontWeight="700" textAnchor="middle" fill="#a4a4a4">1:1</text>
              </Magnifier>
            </Tool>
            <Zoom>8%</Zoom>
            <Tool $w={34} $hh={40}><NewWindow /></Tool>
            <Sep $h={34} $l={9} $r={4} />
            <Tool $w={44} $hh={40}><Fullscreen /></Tool>
            <Tool $ml={3} $hh={40} $active><ShowRight /></Tool>
          </Toolbar>
        </CenterCol>

        <RightCol>
          <ProfileFrame>
            <Legend $top={-12}>Processing Profiles</Legend>
            <ProfileButton><ProfileList /></ProfileButton>
            <Combo $w={185} $h={40} $ml={5}>(Last Saved)<Caret /></Combo>
            <ProfileGroup>
              <Folder />
              <Floppy />
              <CopyDoc />
              <PasteDoc />
            </ProfileGroup>
          </ProfileFrame>
          <TabBar>
            <Tab $active><TabTone /></Tab>
            <Tab><TabLens /></Tab>
            <Tab><TabColor /></Tab>
            <Tab><TabAtom /></Tab>
            <Tab><TabTransform /></Tab>
            <Tab><TabRaw /></Tab>
            <Tab><TabMeta /></Tab>
          </TabBar>
          <SectionHead>
            <HeadCaret />
            Exposure
          </SectionHead>
          <Scroller>
            <ToolFrame>
              <CheckRow $mt={10}>
                <CheckBox><CheckMark /></CheckBox>
                Clip out-of-gamut colors
              </CheckRow>
              <ToolSep $mt={13} />
              <ButtonRow>
                <PushButton $w={120}>Auto Levels</PushButton>
                <ClipLabel>Clip %</ClipLabel>
                <Spin $w={114}>
                  <SpinValue>0.02</SpinValue>
                  <SpinBtn>−</SpinBtn>
                  <SpinBtn>+</SpinBtn>
                </Spin>
                <ClipGap />
                <PushButton $w={74}>Reset</PushButton>
              </ButtonRow>
              <ToolSep $mt={4} />
              <CheckRow $mt={13}>
                <CheckBox><CheckMark /></CheckBox>
                Highlight reconstruction
              </CheckRow>
              <MethodRow>
                Method:
                <Combo $w={304} $h={30}>Blend<Caret /></Combo>
              </MethodRow>
              <ToolSep $mt={6} $mb={7} />
              <Adj label="Exposure compensation" value="0.00" spin={133} pos={50} />
              <Adj label="Highlight compression" value="0" spin={103} pos={3} noFill dimMinus />
              <Adj label="Highlight compression threshold" value="0" spin={103} pos={3} off />
              <Adj label="Black" value="0" spin={133} pos={50} />
              <Adj label="Shadow compression" value="50" spin={103} pos={50} off />
              <ToolSep $mt={2} $mb={7} />
              <Adj label="Lightness" value="0" spin={113} pos={50} />
              <Adj label="Contrast" value="0" spin={113} pos={50} />
              <Adj label="Saturation" value="0" spin={113} pos={50} />
              <ToolSep $mt={2} />
              <WideButton>Auto-Matched Tone Curve</WideButton>
              <ToneRow>
                Tone curve 1:
                <ToneButton>
                  <ToneIcon><ToneGlyph /></ToneIcon>
                  <ToneArrow><Caret /></ToneArrow>
                </ToneButton>
                <Combo $w={173} $h={32} $ml={1}>Film-like<Caret /></Combo>
                <ResetSlot $ml={8}><Undo /></ResetSlot>
              </ToneRow>
              <GraphRow>
                <GradientBar />
                <CurvePlot viewBox="0 0 297 120">
                  <rect x="0.500" y="0.500" width="296" height="119" fill="#2b2b2b" stroke="#1f1f1f" />
                  {GRID_X.map((x) => (
                    <line key={x} x1={x + 0.500} x2={x + 0.500} y1="0" y2="120" stroke="#1f1f1f" />
                  ))}
                  {GRID_Y.map((y) => (
                    <line key={y} x1="0" x2="297" y1={y + 0.500} y2={y + 0.500} stroke="#1f1f1f" />
                  ))}
                  <line x1="295" y1="1" x2="176" y2="120" stroke="#111" strokeDasharray="3 3" />
                  <path d="M4 120C6 60 10 20 16 1L106 1C130 6 148 16 162 32C176 55 190 90 199 120M272 120L295 1" fill="none" stroke="#b4b4b4" strokeWidth="1.300" />
                  {POINTS.map(([x, y]) => (
                    <circle key={x} cx={x} cy={y + 1} r="4" fill="#a8a8a8" />
                  ))}
                </CurvePlot>
                <CurveTools>
                  <PickPoint />
                  <PencilCurve />
                </CurveTools>
              </GraphRow>
            </ToolFrame>
          </Scroller>
        </RightCol>
      </Body>
    </Win>
  );
};

export default App;
